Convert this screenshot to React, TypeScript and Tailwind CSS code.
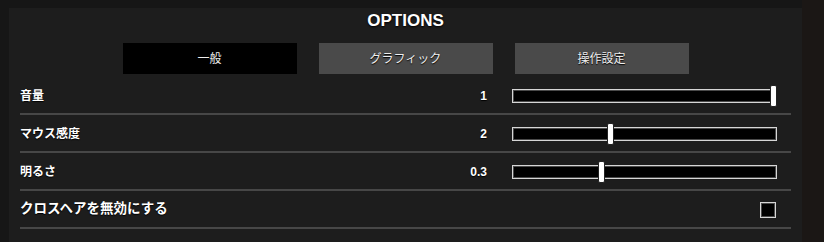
import React from "react";

const font = { fontFamily: '"Liberation Sans", "Noto Sans CJK JP", sans-serif' };

type SliderRow = { label: string; value: string; pos: number };

const sliders: SliderRow[] = [
  { label: "音量", value: "1", pos: 1 },
  { label: "マウス感度", value: "2", pos: 0.368 },
  { label: "明るさ", value: "0.3", pos: 0.333 },
];

const tabs = ["一般", "グラフィック", "操作設定"];

const Slider = ({ pos }: { pos: number }) => (
  <div className="relative w-[265px] h-[14px] mr-[14px] border border-[#d6d6d6] bg-black shadow-[inset_0_0_0_1px_#4a4a4a]">
    <div
      className="absolute top-[-5px] w-[7px] h-[22px] bg-white rounded-[2px] border border-[#222]"
      style={{ left: `calc(${pos} * (100% - 5px) - 1px)` }}
    />
  </div>
);

export default function App() {
  return (
    <div className="w-[824px] h-[242px] bg-[#161616] overflow-hidden flex" style={font}>
      <div className="ml-[9px] mt-[8px] w-[793px] bg-[#1d1d1d] flex flex-col px-[11px]">
        <div className="mt-[3px] h-[20px] leading-[20px] text-center text-white font-bold text-[17px] [text-shadow:0_1px_2px_#000]">
          OPTIONS
        </div>
        <div className="mt-[12px] flex justify-center gap-[22px]">
          {tabs.map((t, i) => (
            <div
              key={t}
              className={`w-[174px] h-[31px] flex items-center justify-center text-[12px] text-[#eee] [text-shadow:0_1px_1px_#000] ${
                i === 0 ? "bg-black" : "bg-[#4a4a4a]"
              }`}
            >
              {t}
            </div>
          ))}
        </div>
        <div className="mt-[3px] flex flex-col">
          {sliders.map((s) => (
            <div key={s.label} className="h-[38px] flex items-center border-b-2 border-[#474747] pt-[1px]">
              <div className="flex-1 text-[12px] font-bold text-white [text-shadow:0_1px_1px_#000]">{s.label}</div>
              <div className="text-[12px] font-bold text-white text-right mr-[25px] [text-shadow:0_1px_1px_#000]">
                {s.value}
              </div>
              <Slider pos={s.pos} />
            </div>
          ))}
          <div className="h-[38px] flex items-center border-b-2 border-[#474747] pt-[1px]">
            <div className="flex-1 text-[13.5px] font-bold text-white [text-shadow:0_1px_1px_#000]">
              クロスヘアを無効にする
            </div>
            <div className="w-[16px] h-[16px] mr-[15px] border border-[#d6d6d6] bg-black shadow-[inset_0_0_0_1px_#4a4a4a]" />
          </div>
        </div>
      </div>
      <div className="flex-1 bg-[#1b1715]" />
    </div>
  );
}
